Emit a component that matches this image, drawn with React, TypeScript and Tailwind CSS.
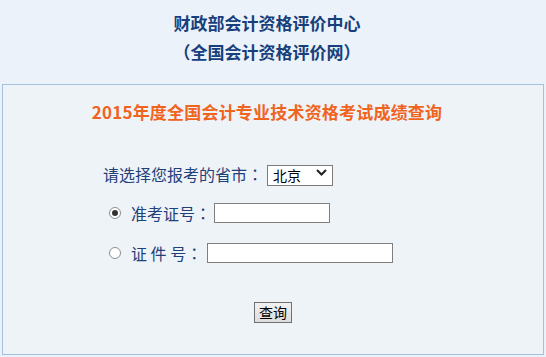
import { useState } from 'react';

const font = { fontFamily: '"Noto Sans CJK SC", "Noto Sans", sans-serif' };

// Full-width colon sitting in the middle of its box, as the old page shows it.
function Colon() {
  return <span style={{ fontFamily: '"Noto Sans CJK TC", sans-serif' }}>：</span>;
}

// Small round radio drawn by hand so it matches the old IE look.
function Radio({ checked, onClick }: { checked: boolean; onClick: () => void }) {
  return (
    <span
      onClick={onClick}
      className="grid h-[12px] w-[12px] shrink-0 cursor-pointer place-items-center rounded-full border border-[#8d8d8d] bg-white"
    >
      {checked && <span className="h-[6px] w-[6px] rounded-full bg-[#333]" />}
    </span>
  );
}

export default function App() {
  const [mode, setMode] = useState<'zkz' | 'id'>('zkz');

  return (
    <div style={font} className="h-[357px] w-[546px] overflow-hidden bg-[#ecf2f9]">
      <div className="pt-[8px] pr-[12px] text-center text-[17px] font-bold leading-[29px] text-[#173f7c]">
        <p>财政部会计资格评价中心</p>
        <p>（全国会计资格评价网）</p>
      </div>

      <div className="mx-[2px] mt-[18px] h-[271px] border border-[#a3c0de] bg-[#eef3f8]">
        <h1 className="pt-[15px] pr-[12px] text-center text-[17px] font-bold leading-[24px] tracking-[0.2px] text-[#f0641e]">
          2015年度全国会计专业技术资格考试成绩查询
        </h1>

        <div className="mt-[38px] flex h-[24px] items-center pl-[100px] text-[16px] text-[#1f4079]">
          <span>
            请选择您报考的省市<Colon />
          </span>
          <span className="relative ml-[4px]">
            <select className="h-[21px] w-[66px] appearance-none border border-[#7a7a7a] bg-white pl-[5px] text-[14px] leading-[19px] text-black outline-none">
              <option>北京</option>
              <option>天津</option>
              <option>河北</option>
              <option>上海</option>
            </select>
            <svg
              className="pointer-events-none absolute right-[6px] top-[6px] h-[9px] w-[11px]"
              viewBox="0 0 11 9"
              fill="none"
              stroke="#222"
              strokeWidth={2}
            >
              <path d="M1 2l4.5 4.5L10 2" />
            </svg>
          </span>
        </div>

        <div className="mt-[15px] flex h-[24px] items-center pl-[106px] text-[16px] text-[#1f4079]">
          <Radio checked={mode === 'zkz'} onClick={() => setMode('zkz')} />
          <span className="ml-[10px]">
            准考证号<Colon />
          </span>
          <input className="ml-[3px] h-[20px] w-[116px] border border-[#7f7f7f] bg-white px-1 text-[13px] text-black outline-none" />
        </div>

        <div className="mt-[16px] flex h-[24px] items-center pl-[106px] text-[16px] text-[#1f4079]">
          <Radio checked={mode === 'id'} onClick={() => setMode('id')} />
          <span className="ml-[10px]">
            证 件 号<Colon />
          </span>
          <input className="ml-[5px] h-[20px] w-[186px] border border-[#7f7f7f] bg-white px-1 text-[13px] text-black outline-none" />
        </div>

        <div className="mt-[37px] flex justify-center">
          <button className="h-[21px] w-[38px] border border-[#707070] bg-gradient-to-b from-[#f2f2f2] to-[#dcdcdc] text-[14px] leading-[19px] text-black">
            查询
          </button>
        </div>
      </div>
    </div>
  );
}
